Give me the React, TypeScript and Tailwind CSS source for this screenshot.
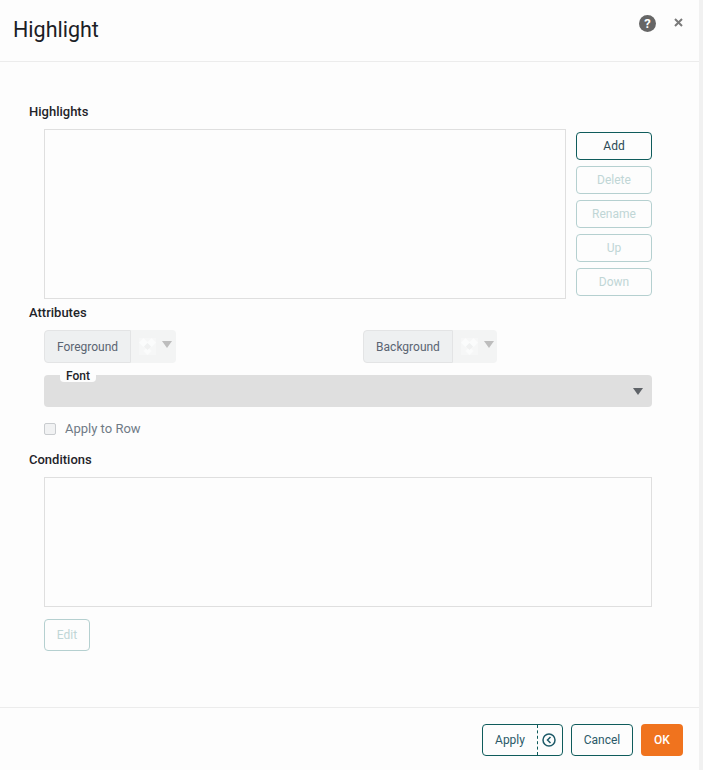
import React from 'react';

const sideButtons = [
  { label: 'Add', disabled: false },
  { label: 'Delete', disabled: true },
  { label: 'Rename', disabled: true },
  { label: 'Up', disabled: true },
  { label: 'Down', disabled: true },
];

// Checkered "no colour" swatch with the dropdown caret
const ColorSwatch = ({ width }: { width: string }) => (
  <div className={`flex h-full items-start rounded-r-[4px] bg-[#f3f4f4] pl-[8px] pt-[8px] ${width}`}>
    <svg width="17" height="17" viewBox="0 0 17 17">
      <path d="M0 0h17v17H0z" fill="#f6f7f7" />
      <path d="M4.500 0l4.500 4.500-4.500 4.500L0 4.500zM12.500 0L17 4.500 12.500 9 8 4.500zM8.500 9l4 4-4 4-4-4z" fill="#fbfcfc" />
      <path d="M8.500 5l3.500 3.500-3.500 3.500L5 8.500z" fill="#f0f1f1" />
    </svg>
    <svg className="ml-[6px] mt-[3px]" width="10" height="7" viewBox="0 0 10 7">
      <path d="M0 0h10L5 7z" fill="#bdbdbd" />
    </svg>
  </div>
);

const ColorPicker = ({ label, labelWidth, swatchWidth }: { label: string; labelWidth: string; swatchWidth: string }) => (
  <div className="flex h-[33px] items-stretch">
    <div className={`flex items-center justify-center rounded-l-[4px] border border-[#e3e4e5] bg-[#eef0f1] text-[12px] text-[#5a6472] ${labelWidth}`}>
      {label}
    </div>
    <ColorSwatch width={swatchWidth} />
  </div>
);

const SectionLabel = ({ children }: { children: React.ReactNode }) => (
  <div className="text-[13px] leading-[16px] font-medium text-[#1f2429]">{children}</div>
);

export default function App() {
  return (
    <div className="flex h-[770px] w-[703px] overflow-hidden bg-[#f1f1f1] font-['Roboto',sans-serif]">
      <div className="flex w-[699px] flex-col bg-[#fdfdfd]">
        {/* Header */}
        <div className="flex h-[62px] shrink-0 items-start justify-between border-b border-[#ececec] pl-[13px] pr-[16px]">
          <h1 className="mt-[16px] text-[21.500px] leading-[28px] font-normal text-[#1c2025]">Highlight</h1>
          <div className="mt-[15px] flex items-center gap-[18px]">
            <div className="flex h-[17px] w-[17px] items-center justify-center rounded-full bg-[#666666] text-[13px] leading-none font-bold text-white">
              ?
            </div>
            <svg width="9" height="9" viewBox="0 0 9 9" className="mb-[2px]">
              <path d="M1 1l7 7M8 1L1 8" stroke="#7a7a7a" strokeWidth="2" />
            </svg>
          </div>
        </div>

        {/* Body */}
        <div className="flex-1 pl-[29px] pt-[42px]">
          <SectionLabel>Highlights</SectionLabel>
          <div className="ml-[15px] mt-[9px] flex items-start gap-[10px]">
            <div className="h-[170px] w-[522px] border border-[#dfdfdf] bg-[#fdfdfd]" />
            <div className="mt-[3px] flex w-[76px] flex-col gap-[6px]">
              {sideButtons.map(b => (
                <button
                  key={b.label}
                  className={`h-[28px] rounded-[4px] border bg-transparent text-[12px] ${
                    b.disabled
                      ? 'border-[#b5d0d0] text-[#c0d6d6]'
                      : 'border-[#0f5c5c] text-[#2b4a55]'
                  }`}
                >
                  {b.label}
                </button>
              ))}
            </div>
          </div>

          <div className="mt-[6px]">
            <SectionLabel>Attributes</SectionLabel>
          </div>
          <div className="ml-[15px] mt-[9px] flex w-[608px] gap-[187px]">
            <ColorPicker label="Foreground" labelWidth="w-[87px]" swatchWidth="w-[45px]" />
            <ColorPicker label="Background" labelWidth="w-[90px]" swatchWidth="w-[44px]" />
          </div>

          {/* Font select, legend sits over its top edge */}
          <div className="relative ml-[15px] mt-[12px] flex h-[32px] w-[608px] items-center justify-end rounded-[4px] bg-[#dfdfdf] pr-[9px]">
            <div className="absolute left-[16px] top-[-6px] h-[13px] rounded-b-[4px] bg-[#fdfdfd] px-[6px] pt-[1px] text-[12px] leading-[13px] font-medium text-[#1f2429]">
              Font
            </div>
            <svg width="10" height="7" viewBox="0 0 10 7">
              <path d="M0 0h10L5 7z" fill="#5f6368" />
            </svg>
          </div>

          <div className="ml-[15px] mt-[15px] flex items-center gap-[9px]">
            <div className="h-[12px] w-[12px] rounded-[2px] border border-[#c9cccf] bg-[#f1f2f3]" />
            <span className="text-[13px] leading-[14px] text-[#6f7a86]">Apply to Row</span>
          </div>

          <div className="mt-[16px]">
            <SectionLabel>Conditions</SectionLabel>
          </div>
          <div className="ml-[15px] mt-[9px] h-[130px] w-[608px] border border-[#dfdfdf] bg-[#fdfdfd]" />
          <button className="ml-[15px] mt-[12px] block h-[32px] w-[46px] rounded-[4px] border border-[#b5d0d0] text-[12px] text-[#c0d6d6]">
            Edit
          </button>
        </div>

        {/* Footer */}
        <div className="flex h-[63px] shrink-0 items-start justify-end gap-[8px] border-t border-[#ececec] pr-[16px] pt-[16px]">
          <div className="flex h-[32px] w-[81px] rounded-[4px] border border-[#0f5c5c] text-[12px] text-[#2b5a68]">
            <button className="w-[55px] border-r border-dashed border-[#0f5c5c]">Apply</button>
            <div className="flex flex-1 items-center justify-center pr-[3px]">
              <svg width="14" height="14" viewBox="0 0 14 14" fill="none" stroke="#1d5a68" strokeWidth="1.500">
                <circle cx="7" cy="7" r="6" />
                <path d="M8.500 4L5.500 7l3 3" />
              </svg>
            </div>
          </div>
          <button className="h-[32px] w-[62px] rounded-[4px] border border-[#0f5c5c] text-[12px] text-[#2b5a68]">
            Cancel
          </button>
          <button className="h-[32px] w-[42px] rounded-[4px] bg-[#f0731e] text-[12px] font-medium text-white">
            OK
          </button>
        </div>
      </div>
    </div>
  );
}
